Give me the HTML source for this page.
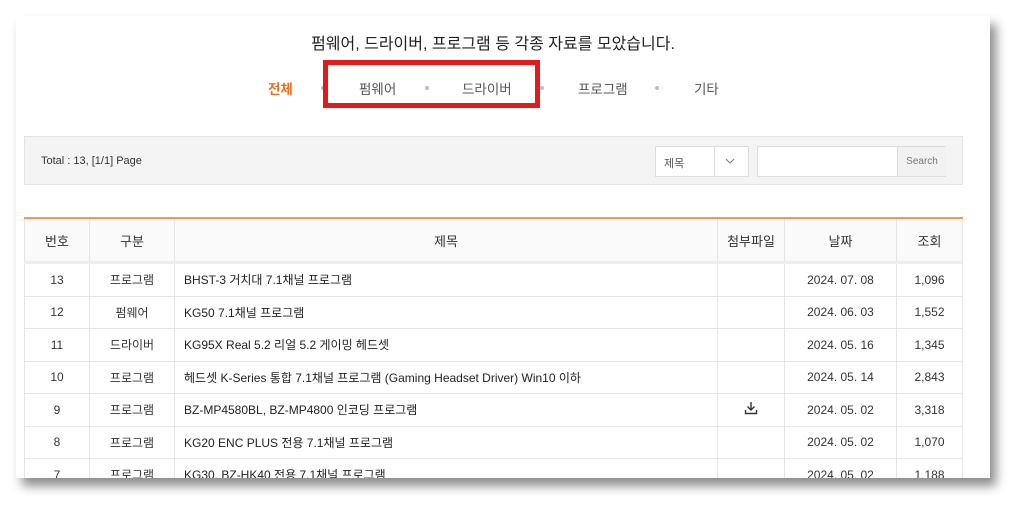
<!DOCTYPE html>
<html><head><meta charset="utf-8"><style>
body{margin:0;width:1024px;height:512px;background:#fff;overflow:hidden;font-family:"Liberation Sans","Noto Sans CJK KR",sans-serif;position:relative}
.card{position:absolute;left:16px;top:16px;width:974px;height:462px;background:#fff;overflow:hidden;box-shadow:6px 8px 10px rgba(0,0,0,.45)}
.abs{position:absolute}
.t{left:0;width:954px;top:14px;text-align:center;font-size:16px;color:#222}
.tab{top:62px;font-size:13.5px;color:#555}
.dot{top:70px;width:4px;height:4px;border-radius:2px;background:#bbb}
.red{left:307px;top:44px;width:207px;height:38px;border:5px solid #e11b1b}
.bar{left:8px;top:120px;width:937px;height:47px;background:#f4f4f4;border:1px solid #e4e4e4}
table{position:absolute;left:8px;top:201px;width:939px;border-collapse:collapse;font-size:12px;color:#333;border-top:2px solid #f19a5a}
td,th{border:1px solid #e6e6e6;height:31.5px;text-align:center;padding:0}
th{height:42px;font-weight:normal;font-size:13px;color:#333;background:#fafafa;border-bottom:3px solid #eee}
td.l{text-align:left;padding-left:9px;color:#222}
</style></head><body>
<div class="card">
<div class="abs t">펌웨어, 드라이버, 프로그램 등 각종 자료를 모았습니다.</div>
<div class="abs tab" style="left:252px;color:#e8701f;font-weight:bold">전체</div>
<div class="abs dot" style="left:305px"></div>
<div class="abs tab" style="left:343px">펌웨어</div>
<div class="abs dot" style="left:409px"></div>
<div class="abs tab" style="left:446px">드라이버</div>
<div class="abs dot" style="left:524px"></div>
<div class="abs tab" style="left:562px">프로그램</div>
<div class="abs dot" style="left:639px"></div>
<div class="abs tab" style="left:678px">기타</div>
<div class="abs red"></div>
<div class="abs bar">
<div class="abs" style="left:16px;top:18px;font-size:11px;color:#333">Total : 13, [1/1] Page</div>
<div class="abs" style="left:630px;top:9px;width:92px;height:29px;background:#fff;border:1px solid #ddd;font-size:11px;color:#555"><span class="abs" style="left:8px;top:8px">제목</span><span class="abs" style="left:58px;top:0;width:1px;height:29px;background:#ddd"></span><svg class="abs" style="left:69px;top:11px" width="10" height="7" viewBox="0 0 10 7" fill="none" stroke="#777" stroke-width="1"><path d="M1 1l4 4 4-4"/></svg></div>
<div class="abs" style="left:732px;top:9px;width:187px;height:29px;background:#fff;border:1px solid #ddd"><div class="abs" style="left:139px;top:0;width:48px;height:29px;background:#f2f2f2;border-left:1px solid #ddd;font-size:10px;color:#777;text-align:center;line-height:29px">Search</div></div>
</div>
<table>
<tr><th style="width:64px">번호</th><th style="width:84px">구분</th><th>제목</th><th style="width:66px">첨부파일</th><th style="width:111px">날짜</th><th style="width:65px">조회</th></tr>
<tr><td>13</td><td>프로그램</td><td class="l">BHST-3 거치대 7.1채널 프로그램</td><td></td><td>2024. 07. 08</td><td>1,096</td></tr>
<tr><td>12</td><td>펌웨어</td><td class="l">KG50 7.1채널 프로그램</td><td></td><td>2024. 06. 03</td><td>1,552</td></tr>
<tr><td>11</td><td>드라이버</td><td class="l">KG95X Real 5.2 리얼 5.2 게이밍 헤드셋</td><td></td><td>2024. 05. 16</td><td>1,345</td></tr>
<tr><td>10</td><td>프로그램</td><td class="l">헤드셋 K-Series 통합 7.1채널 프로그램 (Gaming Headset Driver) Win10 이하</td><td></td><td>2024. 05. 14</td><td>2,843</td></tr>
<tr><td>9</td><td>프로그램</td><td class="l">BZ-MP4580BL, BZ-MP4800 인코딩 프로그램</td><td><svg width="14" height="14" viewBox="0 0 14 14" fill="none" stroke="#333" stroke-width="1.4"><path d="M7 1v8M3.5 5.5L7 9l3.5-3.5M1.5 9v3.5h11V9"/></svg></td><td>2024. 05. 02</td><td>3,318</td></tr>
<tr><td>8</td><td>프로그램</td><td class="l">KG20 ENC PLUS 전용 7.1채널 프로그램</td><td></td><td>2024. 05. 02</td><td>1,070</td></tr>
<tr><td>7</td><td>프로그램</td><td class="l">KG30, BZ-HK40 전용 7.1채널 프로그램</td><td></td><td>2024. 05. 02</td><td>1,188</td></tr>
</table>
</div>
</body></html>
